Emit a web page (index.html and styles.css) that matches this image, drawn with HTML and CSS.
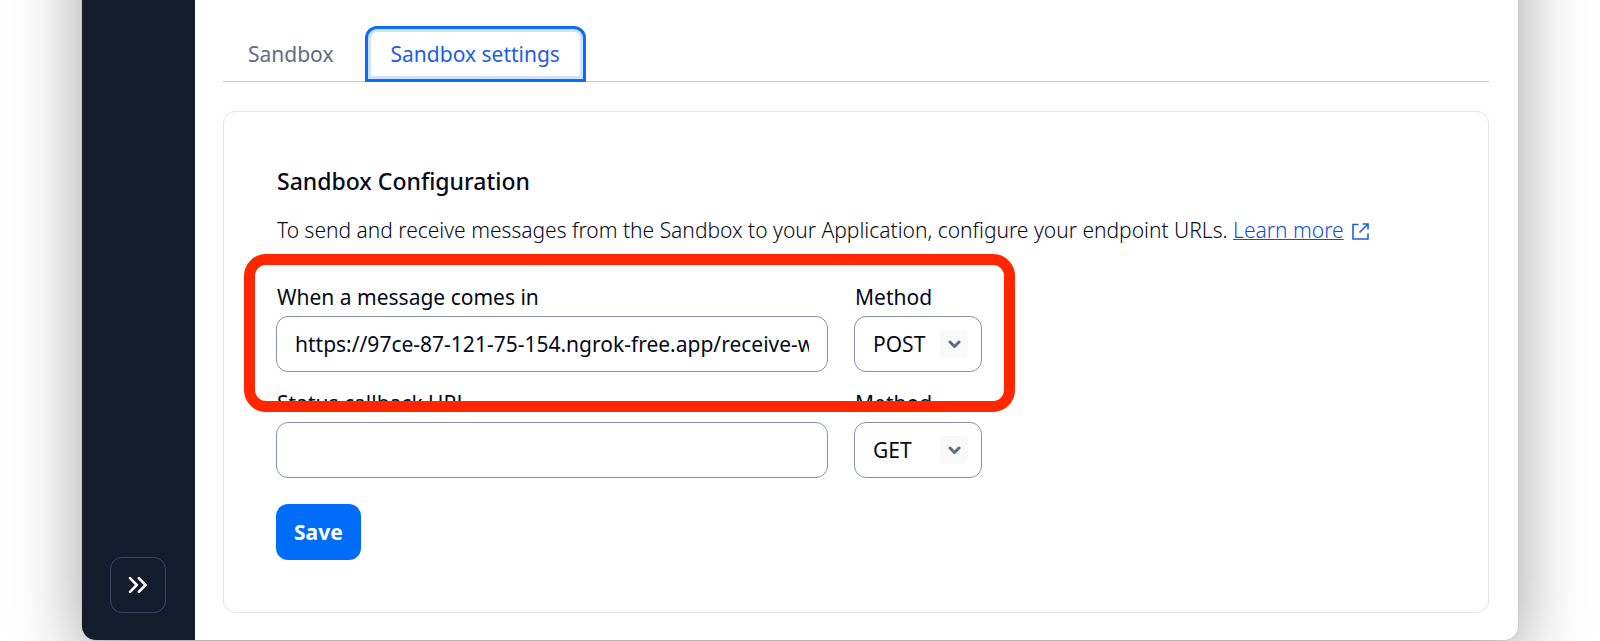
FILE: index.html
```html
<!DOCTYPE html>
<html lang="en">
<head>
<meta charset="utf-8">
<title>Sandbox settings</title>
<link rel="stylesheet" href="styles.css">
</head>
<body>
<div class="window">
  <aside class="sidebar">
    <button class="expand" type="button" aria-label="Expand navigation">
      <svg width="20" height="18" viewBox="0 0 20 18" fill="none" stroke="currentColor" stroke-width="2.6" stroke-linecap="round" stroke-linejoin="round"><path d="M2 2.2L8.8 9L2 15.8M10.8 2.2L17.6 9L10.8 15.8"/></svg>
    </button>
  </aside>
  <main class="content">
    <nav class="tabs" role="tablist">
      <button class="tab" type="button" role="tab" aria-selected="false">Sandbox</button>
      <button class="tab tab-active" type="button" role="tab" aria-selected="true">Sandbox settings</button>
    </nav>
    <form class="card">
      <h2 class="title">Sandbox Configuration</h2>
      <p class="intro">To send and receive messages from the Sandbox to your Application, configure your endpoint URLs. <a class="link" href="#">Learn more</a><svg class="external" width="17" height="17" viewBox="0 0 17 17" fill="none" stroke="currentColor" stroke-width="1.6" aria-hidden="true"><path d="M6.5 1.5H1V16H16V10.5M10.5 1H16V6.5M16 1L7.5 9.5"/></svg></p>
      <div class="fields">
        <div class="row highlighted">
          <div class="field field-url">
            <label class="label" for="incoming">When a message comes in</label>
            <input class="control" id="incoming" type="text" value="https://97ce-87-121-75-154.ngrok-free.app/receive-w">
          </div>
          <div class="field field-method">
            <label class="label" for="incoming-method">Method</label>
            <div class="select-wrap">
              <select class="control" id="incoming-method"><option selected>POST</option><option>GET</option></select>
              <span class="chevron"><svg width="13" height="9" viewBox="0 0 13 9" fill="none" stroke="currentColor" stroke-width="3" stroke-linecap="round" stroke-linejoin="round"><path d="M2 2L6.5 6.5L11 2"/></svg></span>
            </div>
          </div>
        </div>
        <div class="row">
          <div class="field field-url">
            <label class="label" for="status">Status callback URL</label>
            <input class="control" id="status" type="text">
          </div>
          <div class="field field-method">
            <label class="label" for="status-method">Method</label>
            <div class="select-wrap">
              <select class="control" id="status-method"><option>POST</option><option selected>GET</option></select>
              <span class="chevron"><svg width="13" height="9" viewBox="0 0 13 9" fill="none" stroke="currentColor" stroke-width="3" stroke-linecap="round" stroke-linejoin="round"><path d="M2 2L6.5 6.5L11 2"/></svg></span>
            </div>
          </div>
        </div>
      </div>
      <button class="save" type="button">Save</button>
    </form>
  </main>
</div>
</body>
</html>
```
FILE: styles.css
```css
*,
*::after {
  box-sizing: border-box;
}

body {
  margin: 0;
  background: #fff;
  color: #050a18;
  font-family: "Noto Sans", "Open Sans", sans-serif;
  font-size: 21px;
  line-height: 28px;
  overflow: hidden;
}

button,
input,
select {
  font: inherit;
}

/* The window's top edge lies above the viewport. */
.window {
  display: flex;
  margin: -120px 82px 1px;
  padding-top: 120px;
  background: linear-gradient(to right, #121c2d 113px, #fff 113px);
  border-radius: 14px;
  box-shadow: 0 0 1px rgba(0, 0, 0, 0.5), 0 20px 70px rgba(0, 0, 0, 0.37);
}

.sidebar {
  display: flex;
  flex: none;
  align-items: flex-end;
  width: 113px;
  padding: 0 0 27px 28px;
}

.expand {
  display: flex;
  align-items: center;
  justify-content: center;
  width: 56px;
  height: 56px;
  padding: 0;
  border: 1px solid #394762;
  border-radius: 12px;
  background: transparent;
  color: #fff;
}

.content {
  flex: 1;
  min-width: 0;
  padding: 26px 29px 27px 28px;
}

.tabs {
  display: flex;
  gap: 6px;
  height: 56px;
  border-bottom: 1px solid #c5c7dc;
}

.tab {
  height: 56px;
  padding: 0 25px;
  border: 0;
  border-radius: 12px 12px 0 0;
  background: transparent;
  color: #606b85;
}

.tab-active {
  padding: 0 23px;
  border: 3px solid #0d6bff;
  box-shadow: inset 0 0 0 3px #cfe2ff;
  color: #1f5ee0;
}

.card {
  margin-top: 29px;
  padding: 52px;
  border: 1px solid #e4e6ec;
  border-radius: 12px;
}

.title {
  margin: 0;
  font-size: 23px;
  font-weight: 550;
  line-height: 34px;
}

.intro {
  margin: 18px 0 0;
  font-weight: 300;
}

.title,
.intro,
.label {
  padding-left: 1px;
}

.link {
  color: #0f50dc;
  text-decoration-thickness: 1px;
}

.external {
  margin-left: 8px;
  color: #1f5ee0;
  vertical-align: -2px;
}

.fields {
  display: grid;
  gap: 17px;
  margin-top: 39px;
}

.row {
  display: flex;
  gap: 26px;
}

.highlighted {
  position: relative;
}

.highlighted::after {
  content: "";
  position: absolute;
  inset: -29px auto -40px -32px;
  width: 771px;
  border: 11px solid #ff2600;
  border-radius: 22px;
  pointer-events: none;
}

.field-url {
  width: 552px;
}

.field-method {
  width: 128px;
}

.label {
  display: block;
  margin-bottom: 5px;
}

.control {
  display: block;
  width: 100%;
  height: 56px;
  padding: 0 18px;
  border: 1px solid #8891aa;
  border-radius: 12px;
  background: #fff;
  color: inherit;
  appearance: none;
}

.select-wrap {
  position: relative;
}

.chevron {
  position: absolute;
  top: 14px;
  right: 14px;
  display: flex;
  align-items: center;
  justify-content: center;
  width: 28px;
  height: 28px;
  border-radius: 4px;
  background: #f9f9fa;
  color: #606b85;
  pointer-events: none;
}

.save {
  height: 56px;
  margin-top: 26px;
  padding: 0 18px;
  border: 0;
  border-radius: 12px;
  background: #006dfa;
  color: #fff;
  font-weight: 700;
}
```
